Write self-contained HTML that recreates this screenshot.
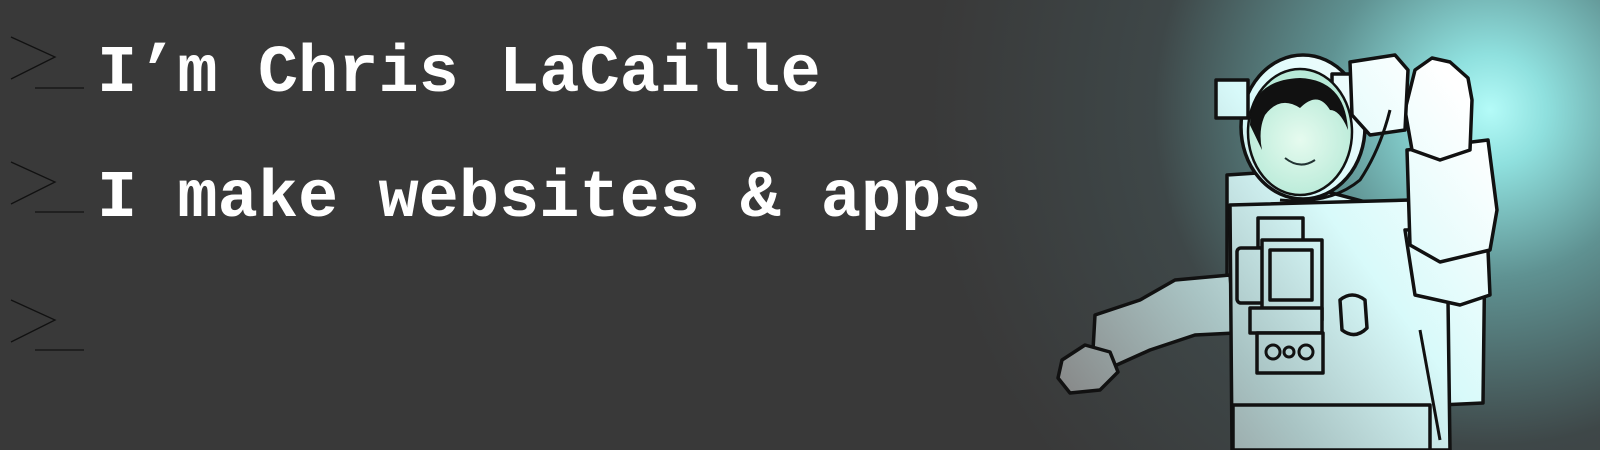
<!DOCTYPE html>
<html><head><style>
html,body{margin:0;padding:0;width:1600px;height:450px;overflow:hidden;background:#393939;}
.t{position:absolute;left:97px;font-family:"Liberation Mono",monospace;font-weight:bold;font-size:67px;color:#fff;line-height:1;white-space:pre;}
svg{position:absolute;left:0;top:0;}
</style></head><body>
<svg width="1600" height="450" viewBox="0 0 1600 450">
<defs>
<radialGradient id="glow" cx="1490" cy="110" r="560" gradientUnits="userSpaceOnUse">
<stop offset="0" stop-color="#b4fbf8"/><stop offset="0.1" stop-color="#8fe0de"/><stop offset="0.3" stop-color="#5f9292"/><stop offset="0.6" stop-color="#3e4748"/><stop offset="1" stop-color="#393939"/>
</radialGradient>
<linearGradient id="suit" x1="1070" y1="420" x2="1480" y2="120" gradientUnits="userSpaceOnUse">
<stop offset="0" stop-color="#858585"/><stop offset="0.35" stop-color="#a9c4c4"/><stop offset="0.65" stop-color="#d8fafa"/><stop offset="1" stop-color="#ffffff"/>
</linearGradient>
<radialGradient id="face" cx="1300" cy="140" r="60" gradientUnits="userSpaceOnUse">
<stop offset="0" stop-color="#e6fbef"/><stop offset="1" stop-color="#b8ead8"/></radialGradient>
</defs>
<rect width="1600" height="450" fill="url(#glow)"/>
<g fill="none" stroke="#111" stroke-width="1.3">
<polyline points="11,37 55,57 11,79" /><line x1="35" y1="88" x2="84" y2="88"/>
<polyline points="11,162 55,182 11,204" /><line x1="35" y1="212" x2="84" y2="212"/>
<polyline points="11,300 55,320 11,342" /><line x1="35" y1="350" x2="84" y2="350"/>
</g>
<g stroke="#111" stroke-width="3.5" stroke-linejoin="round" fill="url(#suit)">
<path d="M1227,175 L1257,173 L1470,230 L1485,240 L1483,403 L1440,405 L1227,300 Z"/>
<path d="M1230,275 L1175,280 L1140,300 L1095,315 L1093,350 L1110,368 L1150,350 L1195,335 L1235,333 Z"/>
<path d="M1062,360 L1085,345 L1110,352 L1118,372 L1100,390 L1070,393 L1058,378 Z"/>
<path d="M1230,205 L1410,200 L1448,300 L1450,450 L1232,450 Z"/>
<path d="M1405,230 L1487,228 L1490,295 L1460,305 L1415,295 Z"/>
<path d="M1407,150 L1488,140 L1497,210 L1490,250 L1440,262 L1410,245 Z"/>
<path d="M1415,70 L1432,58 L1450,62 L1468,78 L1472,100 L1470,150 L1440,160 L1412,150 L1405,110 Z"/>
<ellipse cx="1303" cy="127" rx="62" ry="72"/>
<rect x="1216" y="80" width="32" height="38"/>
<rect x="1332" y="74" width="24" height="38"/>
<path d="M1350,62 L1395,55 L1408,70 L1405,130 L1370,135 L1352,115 Z"/>
<rect x="1258" y="218" width="45" height="30"/>
<rect x="1237" y="248" width="60" height="55" rx="4"/>
<rect x="1262" y="240" width="60" height="80"/>
<rect x="1270" y="250" width="42" height="50"/>
<rect x="1250" y="308" width="72" height="25"/>
<rect x="1257" y="333" width="66" height="40"/>
<path d="M1340,300 Q1352,290 1365,300 L1367,328 Q1355,340 1342,330 Z"/>
<rect x="1233" y="405" width="197" height="45"/>
</g>
<ellipse cx="1300" cy="132" rx="52" ry="63" fill="url(#face)" stroke="#111" stroke-width="2.5"/>
<path d="M1250,125 Q1250,80 1300,78 Q1345,80 1348,130 Q1340,110 1330,110 Q1318,90 1300,108 Q1280,95 1265,115 Q1258,130 1262,150 Z" fill="#111"/>
<path d="M1285,158 Q1300,170 1315,160" fill="none" stroke="#233" stroke-width="2"/>
<g fill="none" stroke="#111" stroke-width="3">
<circle cx="1273" cy="352" r="7"/><circle cx="1289" cy="352" r="5"/><circle cx="1306" cy="352" r="7"/>
<path d="M1390,110 Q1380,150 1360,180 Q1330,205 1280,200"/>
<path d="M1420,330 L1440,440"/>
</g>
</svg>
<div class="t" style="top:41px">I’m Chris LaCaille</div>
<div class="t" style="top:166px">I make websites &amp; apps</div>
</body></html>
